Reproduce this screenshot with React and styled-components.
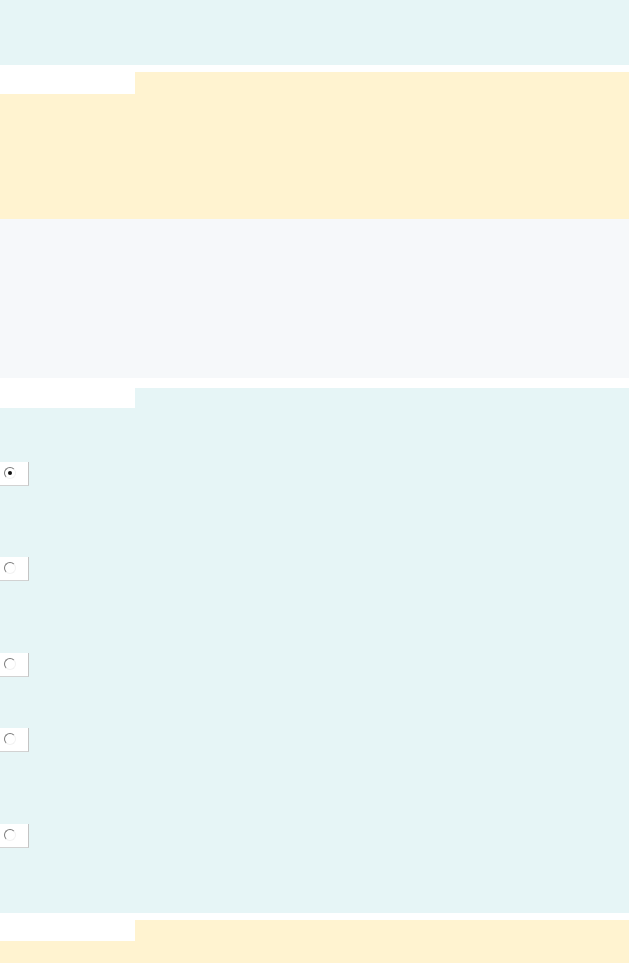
import React from "react";
import styled, { createGlobalStyle } from "styled-components";

const GlobalStyle = createGlobalStyle`
  body {
    margin: 0;
    background: #ffffff;
    font-family: "Liberation Sans", Arial, sans-serif;
  }
`;

const Page = styled.div`
  display: flex;
  flex-direction: column;
  width: 629px;
`;

const Band = styled.div`
  background: ${(p) => p.$bg};
  height: ${(p) => p.$h}px;
  margin-top: ${(p) => p.$gap || 0}px;
`;

const Section = styled.section`
  display: flex;
  flex-direction: column;
  margin-top: ${(p) => p.$gap || 0}px;
`;

const Header = styled.div`
  display: flex;
  height: ${(p) => p.$h}px;
`;

const Tab = styled.div`
  width: 135px;
  background: #ffffff;
`;

const HeaderFill = styled.div`
  flex: 1;
  background: ${(p) => p.$bg};
`;

const Body = styled.div`
  background: ${(p) => p.$bg};
  height: ${(p) => p.$h}px;
`;

const Options = styled.div`
  background: #e6f5f6;
  padding-top: 54px;
  display: flex;
  flex-direction: column;
`;

const Option = styled.label`
  display: flex;
  align-items: flex-start;
  height: ${(p) => p.$h}px;
`;

const RadioBox = styled.span`
  display: flex;
  align-items: center;
  width: 29px;
  height: 24px;
  box-sizing: border-box;
  padding-left: 4px;
  padding-bottom: 1px;
  background: #ffffff;
  border-right: 1px solid #c4c4c4;
  border-bottom: 1px solid #d2d2d2;
`;

const Radio = styled.span`
  position: relative;
  width: 12px;
  height: 12px;
  box-sizing: border-box;
  border-radius: 50%;
  border: 1.5px solid;
  border-color: #7a7a7a #f2f2f2 #f2f2f2 #7a7a7a;
  background: #ffffff;

  &::after {
    content: "";
    display: ${(p) => (p.$on ? "block" : "none")};
    position: absolute;
    left: 2.5px;
    top: 2.5px;
    width: 4px;
    height: 4px;
    border-radius: 50%;
    background: #111111;
  }
`;

const CYAN = "#e6f5f6";
const YELLOW = "#fff3d0";
const GRAY = "#f6f8fa";

const options = [
  { h: 95, on: true },
  { h: 96 },
  { h: 75 },
  { h: 96 },
  { h: 89 },
];

export default function App() {
  return (
    <>
      <GlobalStyle />
      <Page>
        <Band $bg={CYAN} $h={65} />
        <Section $gap={7}>
          <Header $h={22}>
            <Tab />
            <HeaderFill $bg={YELLOW} />
          </Header>
          <Body $bg={YELLOW} $h={125} />
          <Body $bg={GRAY} $h={159} />
        </Section>
        <Section $gap={10}>
          <Header $h={20}>
            <Tab />
            <HeaderFill $bg={CYAN} />
          </Header>
          <Options>
            {options.map((o, i) => (
              <Option key={i} $h={o.h}>
                <RadioBox>
                  <Radio $on={o.on} />
                </RadioBox>
              </Option>
            ))}
          </Options>
        </Section>
        <Section $gap={7}>
          <Header $h={21}>
            <Tab />
            <HeaderFill $bg={YELLOW} />
          </Header>
          <Body $bg={YELLOW} $h={40} />
        </Section>
      </Page>
    </>
  );
}
